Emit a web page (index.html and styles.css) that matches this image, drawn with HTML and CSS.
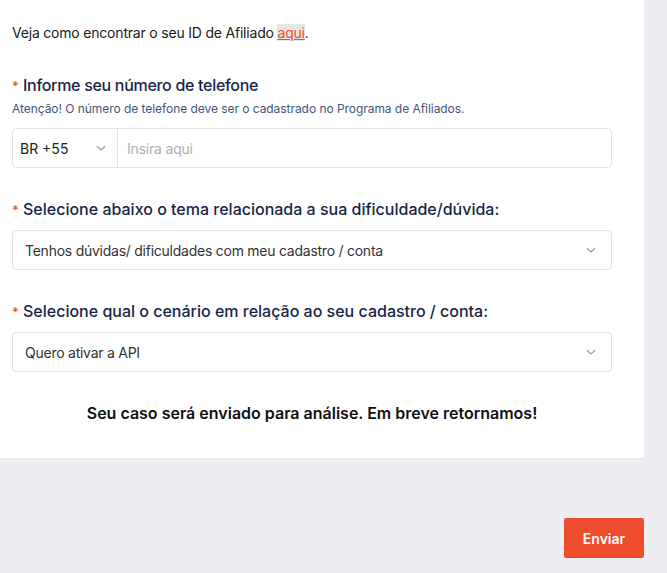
FILE: index.html
```html
<!DOCTYPE html>
<html lang="pt-BR">
<head>
<meta charset="utf-8">
<title>Formulário</title>
<link rel="stylesheet" href="styles.css">
</head>
<body>
<div class="page">
  <div class="card">
    <p class="intro">Veja como encontrar o seu ID de Afiliado <a class="link" href="#">aqui</a>.</p>

    <div class="field field-first">
      <div class="label"><span class="req">*</span>Informe seu número de telefone</div>
      <div class="help">Atenção! O número de telefone deve ser o cadastrado no Programa de Afiliados.</div>
      <div class="phone">
        <div class="country">
          <span>BR +55</span>
          <svg class="chev" width="12" height="12" viewBox="0 0 12 12"><path d="M2 4.2 L6 8 L10 4.2" fill="none" stroke="#9a9a9a" stroke-width="1.2"/></svg>
        </div>
        <div class="number">Insira aqui</div>
      </div>
    </div>

    <div class="field">
      <div class="label"><span class="req">*</span>Selecione abaixo o tema relacionada a sua dificuldade/dúvida:</div>
      <div class="select">
        <span>Tenhos dúvidas/ dificuldades com meu cadastro / conta</span>
        <svg class="chev" width="12" height="12" viewBox="0 0 12 12"><path d="M2 4.2 L6 8 L10 4.2" fill="none" stroke="#9a9a9a" stroke-width="1.2"/></svg>
      </div>
    </div>

    <div class="field">
      <div class="label"><span class="req">*</span>Selecione qual o cenário em relação ao seu cadastro / conta:</div>
      <div class="select">
        <span>Quero ativar a API</span>
        <svg class="chev" width="12" height="12" viewBox="0 0 12 12"><path d="M2 4.2 L6 8 L10 4.2" fill="none" stroke="#9a9a9a" stroke-width="1.2"/></svg>
      </div>
    </div>

    <p class="notice">Seu caso será enviado para análise. Em breve retornamos!</p>
  </div>

  <div class="actions">
    <button class="submit" type="button">Enviar</button>
  </div>
</div>
</body>
</html>
```

FILE: styles.css
```css
html, body {
  margin: 0;
  padding: 0;
}
body {
  background: #edeef2;
  font-family: Inter, "Noto Sans", "Liberation Sans", sans-serif;
  color: #222;
}
.page {
  width: 644px;
}
.card {
  background: #fff;
  padding: 23px 32px 33px 12px;
  box-shadow: 0 1px 2px rgba(0, 0, 0, 0.04);
}
.intro {
  margin: 0;
  font-size: 14px;
  line-height: 20px;
  letter-spacing: -0.2px;
  color: #1a1a1a;
}
.link {
  color: #ee4d2d;
  background: #e6e6e6;
  text-decoration: underline;
}
.field {
  margin-top: 29px;
}
.field-first {
  margin-top: 30px;
}
.label {
  font-size: 16px;
  line-height: 24px;
  font-weight: 500;
  color: #182548;
  display: flex;
  align-items: baseline;
}
.field-first .label {
  letter-spacing: -0.3px;
}
.req {
  color: #ee4d2d;
  font-size: 13px;
  width: 11px;
  flex-shrink: 0;
}
.help {
  margin-top: 3px;
  font-size: 12px;
  line-height: 16px;
  letter-spacing: -0.05px;
  color: #44557a;
}
.phone {
  margin-top: 11px;
  height: 40px;
  box-sizing: border-box;
  border: 1px solid #e3e3e3;
  border-radius: 4px;
  display: flex;
}
.country {
  width: 105px;
  box-sizing: border-box;
  border-right: 1px solid #e3e3e3;
  display: flex;
  align-items: center;
  justify-content: space-between;
  padding: 0 10px 0 7px;
  font-size: 14px;
  color: #222;
}
.number {
  display: flex;
  align-items: center;
  padding-left: 9px;
  font-size: 14px;
  letter-spacing: -0.2px;
  color: #b0b0b0;
}
.select {
  margin-top: 8px;
  height: 40px;
  box-sizing: border-box;
  border: 1px solid #e3e3e3;
  border-radius: 4px;
  display: flex;
  align-items: center;
  justify-content: space-between;
  padding: 0 14px 0 12px;
  font-size: 14px;
  letter-spacing: -0.25px;
  color: #333;
}
.chev {
  display: block;
}
.notice {
  margin: 29px 0 0;
  font-size: 16px;
  line-height: 24px;
  font-weight: 600;
  text-align: center;
  color: #111;
}
.actions {
  display: flex;
  justify-content: flex-end;
  margin-top: 60px;
}
.submit {
  width: 80px;
  height: 40px;
  border: none;
  border-radius: 2px;
  background: #ee4d2d;
  color: #fff;
  font-family: Inter, "Noto Sans", "Liberation Sans", sans-serif;
  font-size: 14px;
  font-weight: 600;
}
```
